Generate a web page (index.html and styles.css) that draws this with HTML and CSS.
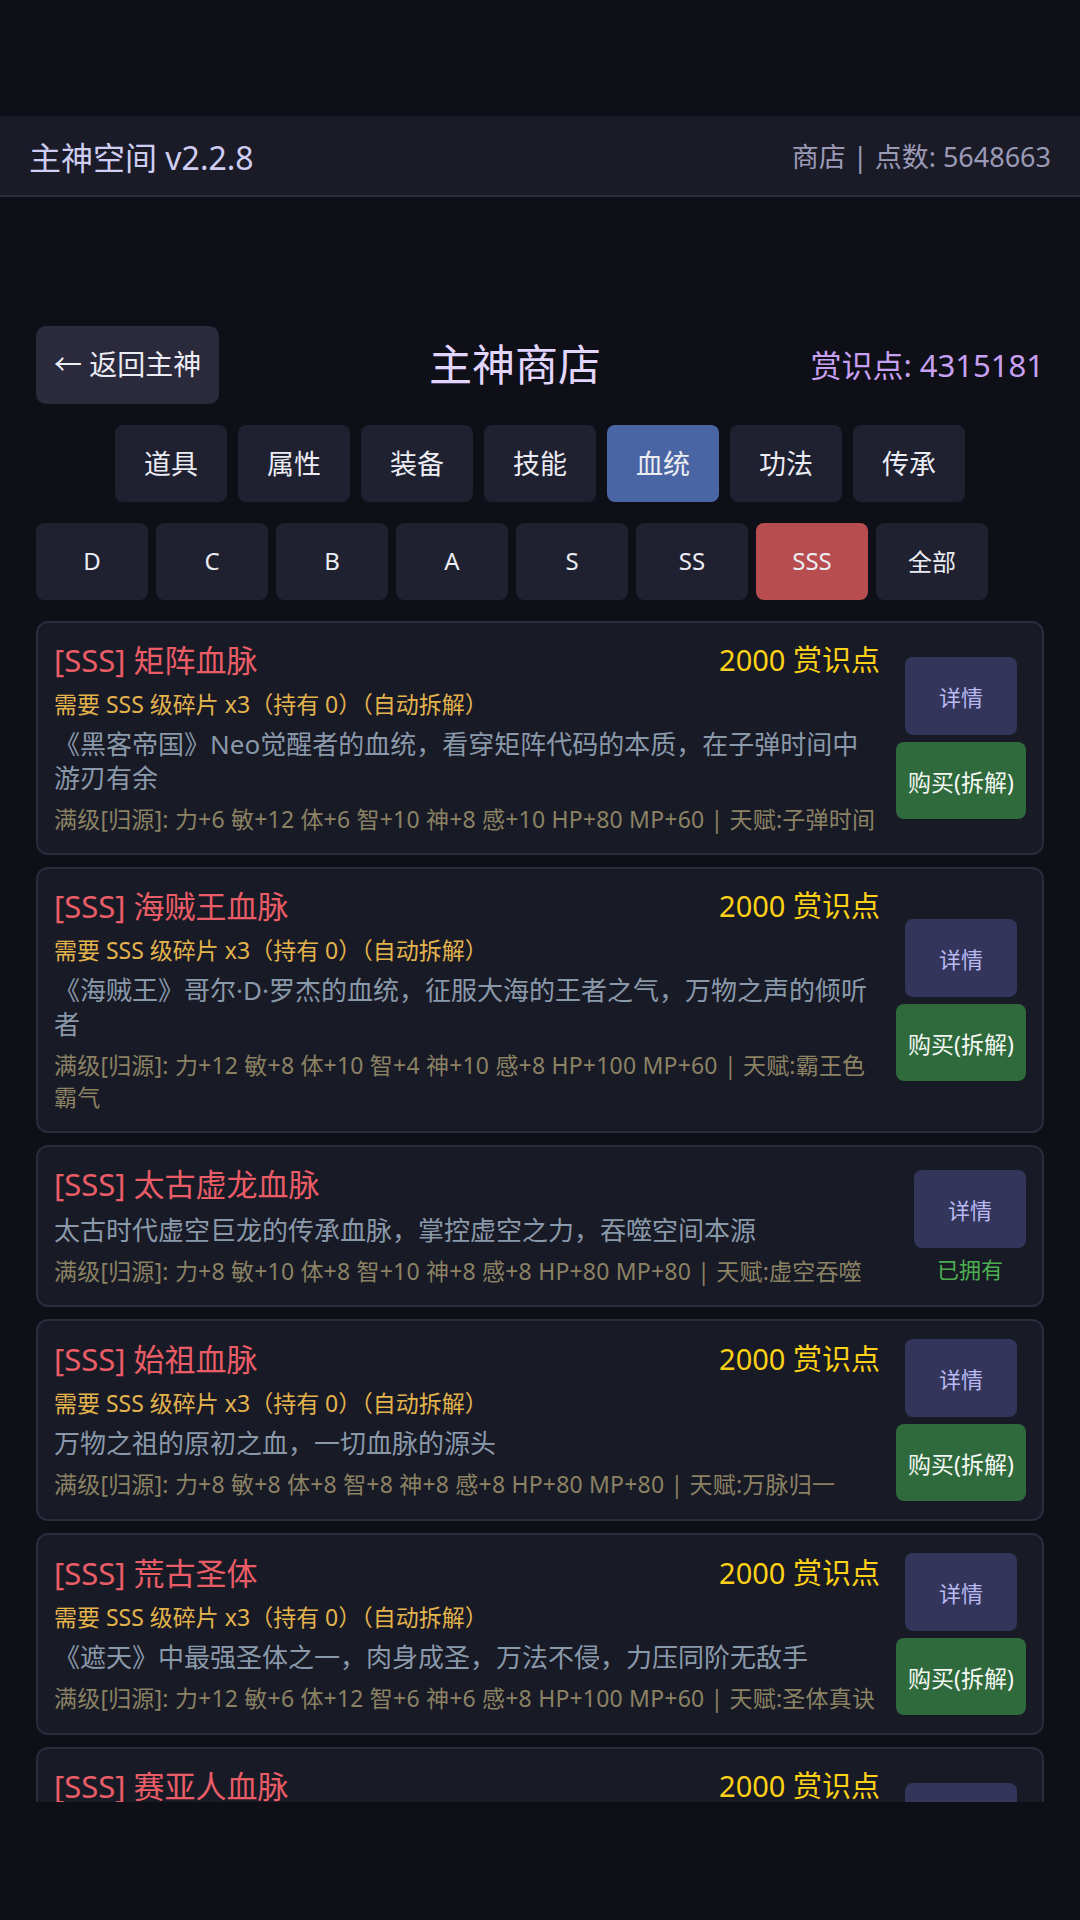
FILE: index.html
```html
<!DOCTYPE html>
<html lang="zh-CN">
<head>
    <meta charset="UTF-8">
    <meta name="viewport" content="width=device-width, initial-scale=1.0">
    <title>主神商店</title>
    <link rel="stylesheet" href="styles.css">
</head>
<body>
    <div class="status-space"></div>

    <header class="topbar">
        <span class="app-name">主神空间 v2.2.8</span>
        <span class="app-info">商店 | 点数: 5648663</span>
    </header>

    <main class="shop">
        <div class="shop-head">
            <button class="back-btn">← 返回主神</button>
            <h1>主神商店</h1>
            <span class="merit">赏识点: 4315181</span>
        </div>

        <div class="cats">
            <button class="tab">道具</button>
            <button class="tab">属性</button>
            <button class="tab">装备</button>
            <button class="tab">技能</button>
            <button class="tab active-blue">血统</button>
            <button class="tab">功法</button>
            <button class="tab">传承</button>
        </div>

        <div class="grades">
            <button class="tab grade">D</button>
            <button class="tab grade">C</button>
            <button class="tab grade">B</button>
            <button class="tab grade">A</button>
            <button class="tab grade">S</button>
            <button class="tab grade">SS</button>
            <button class="tab grade active-red">SSS</button>
            <button class="tab grade">全部</button>
        </div>

        <div class="list">
            <div class="card">
                <div class="info">
                    <div class="title-row">
                        <span class="name">[SSS] 矩阵血脉</span>
                        <span class="price">2000 赏识点</span>
                    </div>
                    <div class="req">需要 SSS 级碎片 x3（持有 0）（自动拆解）</div>
                    <div class="desc">《黑客帝国》Neo觉醒者的血统，看穿矩阵代码的本质，在子弹时间中游刃有余</div>
                    <div class="stats">满级[归源]: 力+6 敏+12 体+6 智+10 神+8 感+10 HP+80 MP+60 | 天赋:子弹时间</div>
                </div>
                <div class="actions">
                    <button class="btn-detail">详情</button>
                    <button class="btn-buy">购买(拆解)</button>
                </div>
            </div>

            <div class="card">
                <div class="info">
                    <div class="title-row">
                        <span class="name">[SSS] 海贼王血脉</span>
                        <span class="price">2000 赏识点</span>
                    </div>
                    <div class="req">需要 SSS 级碎片 x3（持有 0）（自动拆解）</div>
                    <div class="desc">《海贼王》哥尔·D·罗杰的血统，征服大海的王者之气，万物之声的倾听者</div>
                    <div class="stats">满级[归源]: 力+12 敏+8 体+10 智+4 神+10 感+8 HP+100 MP+60 | 天赋:霸王色霸气</div>
                </div>
                <div class="actions">
                    <button class="btn-detail">详情</button>
                    <button class="btn-buy">购买(拆解)</button>
                </div>
            </div>

            <div class="card">
                <div class="info">
                    <div class="title-row">
                        <span class="name">[SSS] 太古虚龙血脉</span>
                    </div>
                    <div class="desc">太古时代虚空巨龙的传承血脉，掌控虚空之力，吞噬空间本源</div>
                    <div class="stats">满级[归源]: 力+8 敏+10 体+8 智+10 神+8 感+8 HP+80 MP+80 | 天赋:虚空吞噬</div>
                </div>
                <div class="actions">
                    <button class="btn-detail">详情</button>
                    <span class="owned">已拥有</span>
                </div>
            </div>

            <div class="card">
                <div class="info">
                    <div class="title-row">
                        <span class="name">[SSS] 始祖血脉</span>
                        <span class="price">2000 赏识点</span>
                    </div>
                    <div class="req">需要 SSS 级碎片 x3（持有 0）（自动拆解）</div>
                    <div class="desc">万物之祖的原初之血，一切血脉的源头</div>
                    <div class="stats">满级[归源]: 力+8 敏+8 体+8 智+8 神+8 感+8 HP+80 MP+80 | 天赋:万脉归一</div>
                </div>
                <div class="actions">
                    <button class="btn-detail">详情</button>
                    <button class="btn-buy">购买(拆解)</button>
                </div>
            </div>

            <div class="card">
                <div class="info">
                    <div class="title-row">
                        <span class="name">[SSS] 荒古圣体</span>
                        <span class="price">2000 赏识点</span>
                    </div>
                    <div class="req">需要 SSS 级碎片 x3（持有 0）（自动拆解）</div>
                    <div class="desc">《遮天》中最强圣体之一，肉身成圣，万法不侵，力压同阶无敌手</div>
                    <div class="stats">满级[归源]: 力+12 敏+6 体+12 智+6 神+6 感+8 HP+100 MP+60 | 天赋:圣体真诀</div>
                </div>
                <div class="actions">
                    <button class="btn-detail">详情</button>
                    <button class="btn-buy">购买(拆解)</button>
                </div>
            </div>

            <div class="card">
                <div class="info">
                    <div class="title-row">
                        <span class="name">[SSS] 赛亚人血脉</span>
                        <span class="price">2000 赏识点</span>
                    </div>
                    <div class="req">需要 SSS 级碎片 x3（持有 0）（自动拆解）</div>
                    <div class="desc">《龙珠》赛亚人的战斗血统，越战越强，濒死复苏后战力暴涨，可觉醒超级赛亚人形态</div>
                    <div class="stats">满级[归源]: 力+12 敏+8 体+12 智+4 神+6 感+8 HP+120 MP+60 | 天赋:战斗种族</div>
                </div>
                <div class="actions">
                    <button class="btn-detail">详情</button>
                    <button class="btn-buy">购买(拆解)</button>
                </div>
            </div>
        </div>
    </main>
</body>
</html>
```

FILE: styles.css
```css
body {
    margin: 0;
    background-color: #0e0f17;
    font-family: "Noto Sans", "Noto Sans CJK SC", sans-serif;
    color: #e8e8f0;
    height: 1920px;
    overflow: hidden;
}
button {
    font-family: inherit;
    border: none;
    cursor: pointer;
}
.status-space {
    height: 116px;
}
.topbar {
    height: 79px;
    background: #1a1b27;
    border-bottom: 2px solid #2b2c3b;
    padding: 0 29px;
    display: flex;
    justify-content: space-between;
    align-items: center;
}
.app-name {
    font-size: 32px;
    color: #cfcdf2;
}
.app-info {
    font-size: 27px;
    color: #9b9ab6;
}
.shop {
    padding: 0 36px;
    margin-top: 129px;
}
.shop-head {
    display: flex;
    justify-content: space-between;
    align-items: center;
    height: 78px;
}
.back-btn {
    height: 78px;
    padding: 0 18px 4px;
    background: #2a2a3c;
    color: #ececf4;
    font-size: 28px;
    border-radius: 10px;
}
h1 {
    margin: 0;
    padding-bottom: 6px;
    font-size: 43px;
    font-weight: normal;
    color: #e2d6ff;
}
.merit {
    padding-bottom: 4px;
    font-size: 31px;
    color: #c7a0f2;
}
.cats {
    margin-top: 21px;
    display: flex;
    justify-content: center;
    gap: 11px;
}
.grades {
    margin-top: 21px;
    display: flex;
    gap: 8px;
}
.tab {
    width: 112px;
    height: 77px;
    padding-bottom: 4px;
    background: #1f2130;
    color: #ececf4;
    font-size: 27px;
    border-radius: 8px;
}
.tab.grade {
    font-size: 24px;
}
.tab.active-blue {
    background: #4a65a3;
}
.tab.active-red {
    background: #b84d4f;
}
.list {
    margin-top: 21px;
    height: 1181px;
    overflow: hidden;
    display: flex;
    flex-direction: column;
    gap: 12px;
}
.card {
    flex-shrink: 0;
    background: #181a26;
    border: 2px solid #2a2c3e;
    border-radius: 12px;
    padding: 18px 16px;
    display: flex;
    align-items: center;
    gap: 16px;
}
.info {
    flex: 1;
    min-width: 0;
}
.title-row {
    display: flex;
    justify-content: space-between;
    align-items: center;
    line-height: 38px;
    margin-bottom: 10px;
}
.name {
    font-size: 31px;
    color: #ea5d66;
}
.price {
    font-size: 29px;
    color: #fcd116;
}
.req {
    font-size: 23px;
    line-height: 30px;
    color: #e3b34c;
    margin-bottom: 8px;
}
.desc {
    font-size: 26px;
    line-height: 34px;
    color: #8a99aa;
    margin-bottom: 8px;
}
.stats {
    font-size: 23px;
    line-height: 32px;
    letter-spacing: 0.2px;
    color: #8b8263;
}
.actions {
    display: flex;
    flex-direction: column;
    align-items: center;
    gap: 7px;
}
.btn-detail {
    width: 112px;
    height: 78px;
    background: #33365a;
    color: #bab9f3;
    font-size: 22px;
    border-radius: 8px;
}
.btn-buy {
    width: 130px;
    height: 77px;
    background: #2f6a3c;
    color: #f4f8f4;
    font-size: 23px;
    border-radius: 8px;
}
.owned {
    font-size: 22px;
    line-height: 28px;
    color: #4cae50;
}
```
